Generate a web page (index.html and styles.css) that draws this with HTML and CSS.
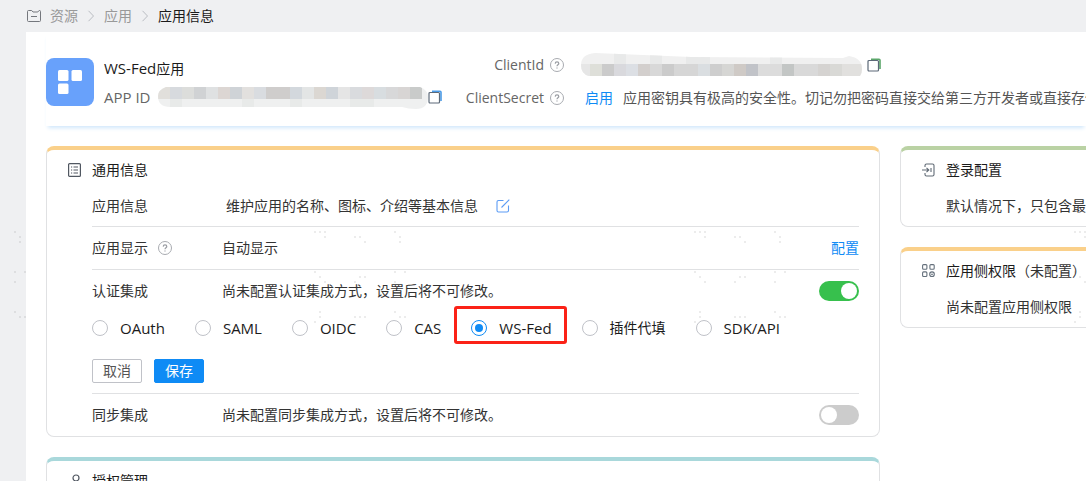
FILE: index.html
```html
<!DOCTYPE html>
<html lang="zh-CN">
<head>
<meta charset="utf-8">
<title>应用信息</title>
<link rel="stylesheet" href="styles.css">
</head>
<body>
<svg class="defs" width="0" height="0" aria-hidden="true">
  <defs>
    <symbol id="help" viewBox="0 0 14 14"><circle cx="7" cy="7" r="6.5" fill="none" stroke="#a8abb0"/><path d="M5.2 5.600C5.300 4.300 6 3.800 7 3.800s1.800.6 1.800 1.600C8.800 6.700 7 6.700 7 8.200M7 9.400v1.200" fill="none" stroke="#9a9da3" stroke-width="1.200"/></symbol>
    <symbol id="chevron" viewBox="0 0 8 12"><path d="M1.500.8 6.500 6l-5 5.200" fill="none" stroke="#b9bcc2"/></symbol>
    <symbol id="copy" viewBox="0 0 14 14"><path d="M4 1.200h8q1 0 1 1V11" fill="none" stroke="currentColor" stroke-width="1.600"/><rect x="1" y="2.500" width="10.500" height="10.500" rx="1" fill="#fff" stroke="#5c6978" stroke-width="1.200"/></symbol>
  </defs>
</svg>

<nav class="crumbs" aria-label="面包屑">
  <svg width="14" height="12" viewBox="0 0 14 12"><path d="M1.500.5h3.200l1.300 1.500h4.800L12 .5h.5q1 0 1 1v9q0 1-1 1h-11q-1 0-1-1v-9q0-1 1-1zM4 6.500h6" fill="none" stroke="#74777d"/></svg>
  <a href="#">资源</a>
  <svg width="8" height="12"><use href="#chevron"/></svg>
  <a href="#">应用</a>
  <svg width="8" height="12"><use href="#chevron"/></svg>
  <span class="current">应用信息</span>
</nav>

<main class="page">
  <header class="app">
    <svg class="logo" width="48" height="48" viewBox="0 0 48 48"><rect width="48" height="48" rx="8" fill="#68a1fb"/><g fill="#fff"><rect x="12" y="12" width="10.500" height="11" rx="1.500"/><rect x="25.500" y="12" width="10.500" height="11" rx="1.500"/><rect x="12" y="25.500" width="10.500" height="10.500" rx="1.500"/></g></svg>
    <div class="identity">
      <div class="name"><span class="latin">WS-Fed</span>应用</div>
      <div class="app-id">
        <span class="key latin">APP ID</span>
        <svg width="270" height="24" viewBox="0 0 270 24" role="img" aria-label="已隐藏">
          <clipPath id="c1"><path d="M8 2H262Q270 5 270 12 270 24 258 24 250 24 244 22H12Q0 22 0 11 0 5 8 2z"/></clipPath>
          <g clip-path="url(#c1)"><rect width="270" height="24" fill="#eff0f0"/>
          <path fill="#e1dfdb" d="M0 2h12v12H0z"/><path fill="#d7dade" d="M12 2h12v12H12z"/><path fill="#dcdddb" d="M24 2h12v12H24z"/><path fill="#d0d2d4" d="M36 2h12v12H36z"/><path fill="#dfe1e2" d="M48 2h12v12H48z"/><path fill="#dcd6d3" d="M60 2h12v12H60z"/><path fill="#cfd3d7" d="M72 2h12v12H72z"/><path fill="#e2e0de" d="M84 2h12v12H84z"/><path fill="#d9dce0" d="M96 2h12v12H96z"/><path fill="#cfcdcc" d="M108 2h24v12h-24z"/><path fill="#d3d8dd" d="M132 2h12v12h-12z"/><path fill="#e3e5e5" d="M144 2h12v12h-12z"/><path fill="#dbd7d2" d="M156 2h12v12h-12z"/><path fill="#cfd4d9" d="M168 2h12v12h-12z"/><path fill="#e5e5e5" d="M180 2h12v12h-12z"/><path fill="#d9dbde" d="M192 2h12v12h-12z"/><path fill="#ddd9d9" d="M204 2h12v12h-12z"/><path fill="#d8dde0" d="M216 2h12v12h-12z"/><path fill="#d8d8d9" d="M228 2h12v12h-12z"/><path fill="#d8d5d4" d="M240 2h12v12h-12z"/><path fill="#c9cbca" d="M252 2h12v12h-12z"/>
          <path fill="#e8eae9" d="M12 14h12v10H12zM84 14h12v10H84zM132 14h12v10h-12zM192 14h24v10h-24z"/></g>
        </svg>
        <button class="icon-btn blue" type="button" aria-label="复制 APP ID"><svg width="14" height="14"><use href="#copy"/></svg></button>
      </div>
    </div>
    <div class="client">
      <div class="key">ClientId</div>
      <svg width="14" height="14"><use href="#help"/></svg>
      <div class="secret-id">
        <svg width="281" height="24" viewBox="0 0 281 24" role="img" aria-label="已隐藏">
          <clipPath id="c2"><path d="M14 0 110 4 262 5 268 3Q281 5 281 16 281 20 279 23H8Q0 21 0 12 0 1 14 0z"/></clipPath>
          <g clip-path="url(#c2)"><rect width="281" height="24" fill="#f0f0f0"/>
          <path fill="#e8e9e9" d="M33 0h12v11H33zM69 0h12v11H69zM105 0h24v11h-24zM189 0h12v11h-12z"/>
          <path fill="#e6e6e6" d="M0 11h9v12H0z"/><path fill="#dedfd9" d="M9 11h12v12H9z"/><path fill="#cbcbcb" d="M21 11h12v12H21z"/><path fill="#d9d9dd" d="M33 11h12v12H33z"/><path fill="#dcdfe4" d="M45 11h12v12H45z"/><path fill="#d3cfcd" d="M57 11h12v12H57z"/><path fill="#d8d8d8" d="M69 11h12v12H69z"/><path fill="#cbcbcb" d="M81 11h12v12H81z"/><path fill="#d6d6d6" d="M93 11h24v12H93z"/><path fill="#dadee1" d="M117 11h12v12h-12z"/><path fill="#cecece" d="M129 11h12v12h-12z"/><path fill="#d6d6d4" d="M141 11h12v12h-12z"/><path fill="#cfcac6" d="M153 11h12v12h-12z"/><path fill="#c1c3c8" d="M165 11h12v12h-12z"/><path fill="#dcdcdc" d="M177 11h24v12h-24z"/><path fill="#c3c6c5" d="M201 11h12v12h-12z"/><path fill="#d9d9d9" d="M213 11h24v12h-24z"/><path fill="#d5d3d1" d="M237 11h12v12h-12z"/><path fill="#d9d9d6" d="M249 11h12v12h-12z"/><path fill="#e1e0de" d="M261 11h20v12h-20z"/></g>
        </svg>
        <button class="icon-btn green" type="button" aria-label="复制 ClientId"><svg width="14" height="14"><use href="#copy"/></svg></button>
      </div>
      <div class="key">ClientSecret</div>
      <svg width="14" height="14"><use href="#help"/></svg>
      <div class="secret"><a href="#">启用</a><span>应用密钥具有极高的安全性。切记勿把密码直接交给第三方开发者或直接存储</span></div>
    </div>
  </header>

  <div class="columns">
    <div class="column">
      <section class="card orange">
        <h2 class="title"><svg width="13" height="14" viewBox="0 0 13 14"><rect x=".6" y=".6" width="11.800" height="12.800" rx="1" fill="none" stroke="#505761" stroke-width="1.200"/><path d="M3 4h1.200M5.500 4H10M3 7h1.200M5.500 7H10M3 10h1.200M5.500 10H10" stroke="#505761"/></svg>通用信息</h2>
        <div class="body">
          <div class="row first">
            <span class="label">应用信息</span>
            <span class="value inset">维护应用的名称、图标、介绍等基本信息</span>
            <button class="icon-btn" type="button" aria-label="编辑"><svg width="14" height="14" viewBox="0 0 14 14"><path d="M7.500 1.500H2.500q-1.500 0-1.500 1.500v8.500q0 1.500 1.500 1.500h8.500q1.500 0 1.500-1.500V6.500M5.500 8.500 13.300.7" fill="none" stroke="#5c9cf5" stroke-width="1.100"/></svg></button>
          </div>
          <div class="row">
            <span class="label">应用显示<svg width="14" height="14"><use href="#help"/></svg></span>
            <span class="value">自动显示</span>
            <a class="end" href="#">配置</a>
          </div>
          <div class="row open">
            <label class="label" for="auth">认证集成</label>
            <span class="value">尚未配置认证集成方式，设置后将不可修改。</span>
            <input class="switch end" type="checkbox" id="auth" checked>
          </div>
          <form class="auth-form">
            <div class="options">
              <label class="latin"><input type="radio" name="mode">OAuth</label>
              <label class="latin"><input type="radio" name="mode">SAML</label>
              <label class="latin"><input type="radio" name="mode">OIDC</label>
              <label class="latin"><input type="radio" name="mode">CAS</label>
              <label class="latin marked"><input type="radio" name="mode" checked>WS-Fed</label>
              <label><input type="radio" name="mode">插件代填</label>
              <label class="latin"><input type="radio" name="mode">SDK/API</label>
            </div>
            <div class="actions">
              <button class="btn" type="button">取消</button>
              <button class="btn primary" type="button">保存</button>
            </div>
          </form>
          <div class="row open">
            <label class="label" for="sync">同步集成</label>
            <span class="value">尚未配置同步集成方式，设置后将不可修改。</span>
            <input class="switch end" type="checkbox" id="sync">
          </div>
        </div>
      </section>
      <section class="card teal">
        <h2 class="title"><svg width="13" height="14" viewBox="0 0 13 14"><circle cx="8" cy="4" r="3" fill="none" stroke="#505761" stroke-width="1.200"/><path d="M2 13.500q0-6 6-6 4 0 4.500 4" fill="none" stroke="#505761" stroke-width="1.200"/></svg>授权管理</h2>
      </section>
    </div>
    <div class="column">
      <section class="card green-top cut">
        <h2 class="title"><svg width="13" height="14" viewBox="0 0 13 14"><path d="M3 4V2.500Q3 1 4.500 1h6Q12 1 12 2.500v9q0 1.500-1.500 1.500h-6Q3 13 3 11.500V10M0 7h6.500M4.500 4.800 6.800 7 4.500 9.200M9 5v4" fill="none" stroke="#606a75" stroke-width="1.100"/></svg>登录配置</h2>
        <p class="text">默认情况下，只包含最基本的登录配置</p>
      </section>
      <section class="card orange cut">
        <h2 class="title"><svg width="13" height="14" viewBox="0 0 13 14"><g fill="none" stroke="#65707c" stroke-width="1.100"><rect x=".6" y=".6" width="4.300" height="4.600" rx="1"/><rect x="7.900" y=".6" width="4.300" height="4.600" rx="1"/><rect x=".6" y="7.900" width="4.300" height="4.600" rx="1"/><circle cx="10" cy="10.200" r="2.300"/><path d="M9 10.200h2"/></g></svg><span>应用侧权限<span class="note">（未配置）</span></span></h2>
        <p class="text">尚未配置应用侧权限</p>
      </section>
    </div>
  </div>
</main>

<svg class="watermark" aria-hidden="true">
  <defs>
    <pattern id="dots" x="-70" y="0" width="380" height="300" patternUnits="userSpaceOnUse">
      <path fill="#000" fill-opacity=".075" d="M4 5h2v2h-2zM9 5h2v2h-2zM14 5h2v2h-2zM14 10h2v2h-2zM44 10h2v2h-2zM49 10h2v2h-2zM54 15h2v2h-2zM84 5h2v2h-2zM89 10h2v2h-2zM89 15h2v2h-2zM4 45h2v2h-2zM9 50h2v2h-2zM14 55h2v2h-2zM44 55h2v2h-2zM49 50h2v2h-2zM54 50h2v2h-2zM84 45h2v2h-2zM94 45h2v2h-2zM84 55h2v2h-2zM9 85h2v2h-2zM9 90h2v2h-2zM4 95h2v2h-2zM44 90h2v2h-2zM49 90h2v2h-2zM54 90h2v2h-2zM84 85h2v2h-2zM89 90h2v2h-2zM94 90h2v2h-2z"/>
    </pattern>
  </defs>
  <rect width="100%" height="100%" fill="url(#dots)"/>
</svg>
</body>
</html>
```
FILE: styles.css
```css
* { box-sizing: border-box; }

body {
  position: relative;
  height: 100vh;
  margin: 0;
  padding-left: 26px;
  overflow: hidden;
  background: #eff0f2;
  color: #333;
  font: 14px/20px "Open Sans", "Noto Sans CJK SC", sans-serif;
  white-space: nowrap;
}

svg { display: block; flex: none; }
.defs { position: absolute; }
a { color: #0f8bf5; text-decoration: none; }
h2, p { margin: 0; font: inherit; }
button, input { margin: 0; font: inherit; }
.latin { font-size: 15px; }

.crumbs {
  display: flex;
  align-items: center;
  gap: 9px;
  height: 32px;
  padding-left: 1px;
}
.crumbs a { color: #999; }
.crumbs .current { color: #1b1b1b; }

.page {
  min-height: 100%;
  padding-left: 20px;
  background: #fff;
}

.app {
  display: flex;
  height: 94px;
  overflow: hidden;
  box-shadow: 0 4px 4px -2px #d0e7fb;
}
.logo { margin: 26px 10px 0 0; }
.key { color: #666; }
.identity { flex: none; width: 360px; padding-top: 26px; }
.name { color: #1b1b1b; }
.app-id {
  display: grid;
  grid-template-columns: 54px 270px 14px;
  align-items: center;
  height: 24px;
  margin-top: 6px;
}
.icon-btn { padding: 0; border: 0; background: none; cursor: pointer; }
.blue { color: #4a9be8; }
.green { color: #5ba66a; }

.client {
  display: grid;
  grid-template-columns: 80px 14px auto;
  grid-template-rows: 33px 33px;
  align-content: start;
  align-items: center;
  column-gap: 6px;
  padding-top: 16px;
}
.client .key { justify-self: end; }
.secret-id { display: flex; align-items: center; gap: 5px; padding-left: 11px; }
.secret { display: flex; gap: 10px; padding-left: 15px; color: #555; }

.columns {
  display: grid;
  grid-template-columns: minmax(0, 1fr) 186px;
  gap: 20px;
  margin-top: 20px;
}
.column { display: flex; flex-direction: column; gap: 20px; }

.card {
  border: 1px solid #e0e1e3;
  border-top-width: 4px;
  border-radius: 8px;
}
.orange { border-top-color: #fad08a; }
.teal { border-top-color: #a9d8db; }
.green-top { border-top-color: #bad2a4; }
.cut {
  overflow: hidden;
  padding-bottom: 4px;
  border-right: 0;
  border-radius: 8px 0 0 8px;
}

.title {
  display: flex;
  align-items: center;
  gap: 11px;
  height: 40px;
  padding-left: 21px;
  color: #1b1b1b;
}
.note { color: #333; }
.text { padding-left: 45px; line-height: 32px; }

.body { margin: 0 20px 0 45px; }
.row {
  display: flex;
  align-items: center;
  height: 43px;
  border-bottom: 1px solid #e0e1e3;
}
.first { height: 37px; padding-bottom: 4px; }
.open { height: 42px; border-bottom: 0; }
.label { display: flex; align-items: center; gap: 10px; width: 130px; }
.inset { padding: 0 18px 0 4px; }
.end { margin-left: auto; }

.switch {
  display: flex;
  width: 40px;
  height: 20px;
  padding: 2px;
  border-radius: 10px;
  background: #ccc;
  appearance: none;
}
.switch::before {
  width: 16px;
  height: 16px;
  border-radius: 50%;
  background: #fff;
  content: "";
}
.switch:checked { justify-content: flex-end; background: #37c04d; }

.auth-form { padding-bottom: 10px; border-bottom: 1px solid #e0e1e3; }
.options { display: flex; gap: 30px; height: 32px; align-items: center; color: #1b1b1b; }
.options label { position: relative; display: flex; align-items: center; gap: 12px; }
.options input {
  display: grid;
  place-content: center;
  width: 16px;
  height: 16px;
  border: 1px solid #c0c2c8;
  border-radius: 50%;
  background: #fff;
  appearance: none;
}
.options input:checked { border-color: #0f8bf5; }
.options input:checked::before {
  width: 8px;
  height: 8px;
  border-radius: 50%;
  background: #0f8bf5;
  content: "";
}
.marked::after {
  position: absolute;
  inset: -12px -15px -6px -17px;
  border: 3px solid #fb2217;
  border-radius: 3px;
  content: "";
}

.actions { display: flex; gap: 12px; margin-top: 15px; }
.btn {
  width: 50px;
  height: 24px;
  padding: 0;
  border: 1px solid #c0c2c8;
  border-radius: 2px;
  background: #fff;
  color: #555;
  line-height: 20px;
}
.primary { border-color: #0f8bf5; background: #0f8bf5; color: #fff; }

.watermark {
  position: absolute;
  inset: 226px 0 0;
  width: 100%;
  height: 120px;
  pointer-events: none;
}
```
